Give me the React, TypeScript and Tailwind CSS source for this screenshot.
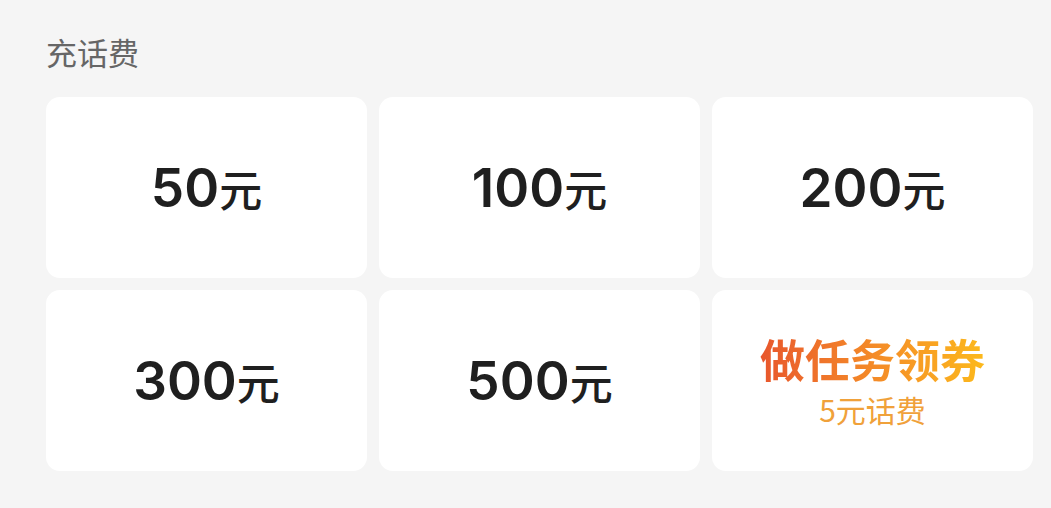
import React from 'react';

const amounts = ['50', '100', '200', '300', '500'];

function AmountCard({ value }: { value: string }) {
  return (
    <button className="h-[181px] rounded-[14px] bg-white flex items-center justify-center">
      <span className="flex items-baseline text-[#1f1f1f] translate-y-[1px]">
        <span className="font-['Inter'] font-semibold text-[53px] leading-none">{value}</span>
        <span className="font-['Noto_Sans_CJK_SC'] font-medium text-[43px] leading-none">元</span>
      </span>
    </button>
  );
}

function TaskCard() {
  return (
    <button className="h-[181px] rounded-[14px] bg-white flex flex-col items-center justify-center">
      <span className="font-['Noto_Sans_CJK_SC'] font-bold text-[45px] leading-[48px] bg-gradient-to-r from-[#e8562c] to-[#fcb91b] bg-clip-text text-transparent">
        做任务领券
      </span>
      <span className="mt-[8px] font-['Noto_Sans_CJK_SC'] text-[30px] leading-[36px] text-[#f0a13a]">
        5元话费
      </span>
    </button>
  );
}

export default function App() {
  return (
    <div className="w-[1051px] h-[508px] bg-[#f5f5f5] pl-[46px] pr-[18px] pt-[31px] font-['Noto_Sans_CJK_SC',sans-serif]">
      <h2 className="text-[31px] leading-[42px] text-[#666666] mb-[24px]">充话费</h2>
      <div className="grid grid-cols-3 gap-[12px]">
        {amounts.map((a) => (
          <AmountCard key={a} value={a} />
        ))}
        <TaskCard />
      </div>
    </div>
  );
}
